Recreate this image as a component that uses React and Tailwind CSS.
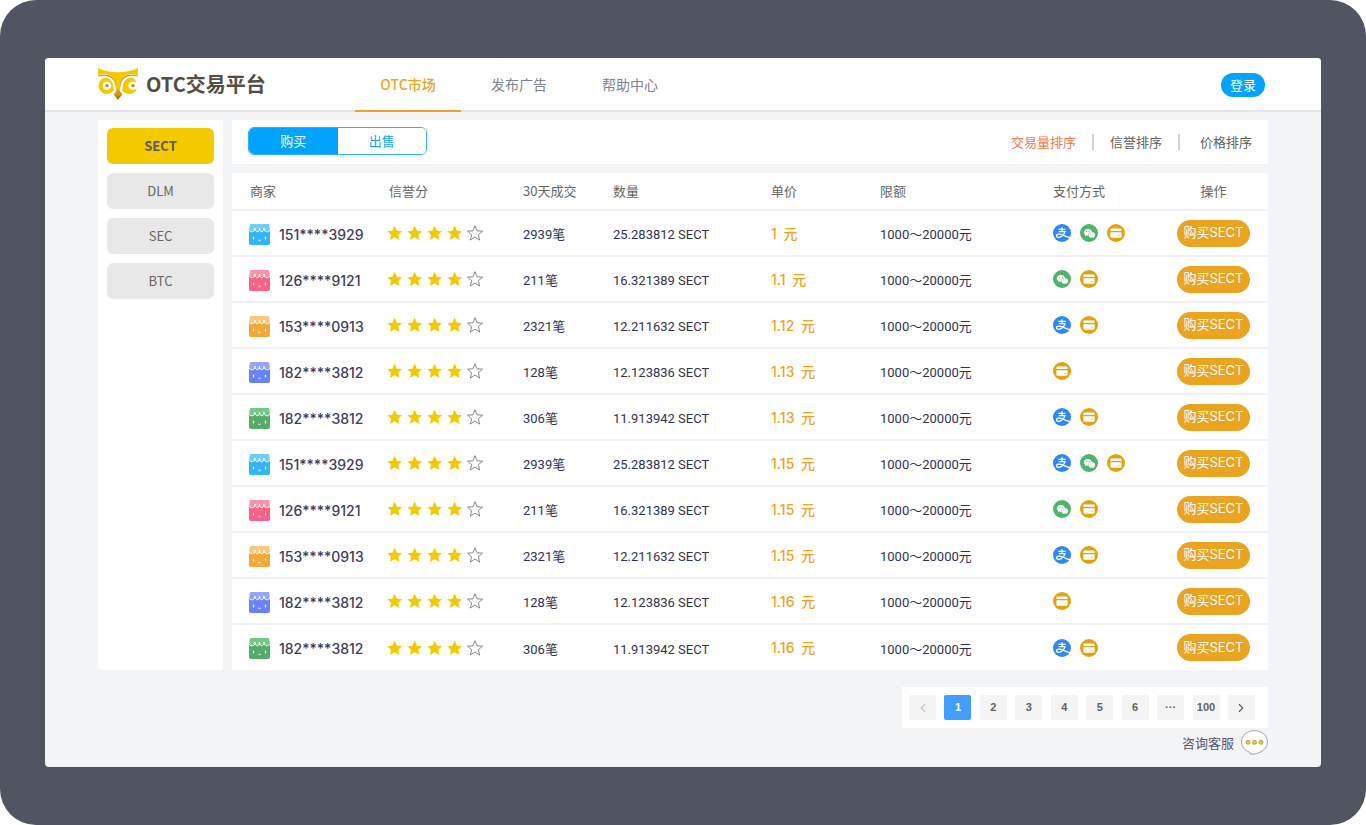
import { useState } from "react";
import clsx from "clsx";
import { ChevronLeft, ChevronRight } from "lucide-react";
import { AiFillWechat } from "react-icons/ai";

const NAV = ["OTC市场", "发布广告", "帮助中心"];
const COINS = ["SECT", "DLM", "SEC", "BTC"];
const SORTS = ["交易量排序", "信誉排序", "价格排序"];
const PAGES = ["1", "2", "3", "4", "5", "6", "···", "100"];

const COLUMNS = [
  { label: "商家", className: "w-[155px] pl-[18px] text-left" },
  { label: "信誉分", className: "w-[136px] pl-[2px] text-left" },
  { label: "30天成交", className: "w-[90px] text-left" },
  { label: "数量", className: "w-[158px] text-left" },
  { label: "单价", className: "w-[109px] text-left" },
  { label: "限额", className: "w-[173px] text-left" },
  { label: "支付方式", className: "w-[106px] text-left" },
  { label: "操作", className: "w-[109px] text-center" },
];

const SELLERS = [
  { phone: "151****3929", deals: 2939, amount: "25.283812", pay: ["alipay", "wechat", "card"], body: "#33b5fb", roof: "#6fcdfb" },
  { phone: "126****9121", deals: 211, amount: "16.321389", pay: ["wechat", "card"], body: "#fb6087", roof: "#fd92ab" },
  { phone: "153****0913", deals: 2321, amount: "12.211632", pay: ["alipay", "card"], body: "#f3a93a", roof: "#fbc77b" },
  { phone: "182****3812", deals: 128, amount: "12.123836", pay: ["card"], body: "#6783fb", roof: "#93a6fc" },
  { phone: "182****3812", deals: 306, amount: "11.913942", pay: ["alipay", "card"], body: "#57ab6a", roof: "#74c986" },
];

const PRICES = ["1", "1.1", "1.12", "1.13", "1.13", "1.15", "1.15", "1.15", "1.16", "1.16"];

const OFFERS = PRICES.map((price, i) => ({ id: i, price, ...SELLERS[i % SELLERS.length] }));

function OwlLogo() {
  return (
    <svg viewBox="0 0 122 98" className="h-[32px] w-[42px]" aria-hidden="true">
      <circle cx="27" cy="54" r="26" fill="#f5c900" />
      <circle cx="27" cy="54" r="13" fill="#fff" />
      <circle cx="27" cy="54" r="5" fill="#c98a12" />
      <circle cx="95" cy="54" r="26" fill="#f5c900" />
      <circle cx="106" cy="54" r="13" fill="#fff" />
      <path d="M106 48L124 40V68L106 60Z" fill="#fff" />
      <circle cx="107" cy="54" r="5" fill="#c98a12" />
      <path d="M0 22C26 16 44 26 50 46L55 78H67L72 46C78 26 96 16 122 22V30C100 25 84 31 77 48L72 78H50L45 48C38 31 22 25 0 30Z" fill="#fff" />
      <path d="M1 23C26 15 48 23 55 44L58 74H64L67 44C74 23 96 15 121 23V26C98 20 78 27 70 45L65 76H57L52 45C44 27 24 20 1 26Z" fill="#d69a12" />
      <path d="M0 0C18 9 40 13 61 13C82 13 104 9 122 0V23C98 14 76 22 68 42L64 76H58L54 42C46 22 24 14 0 23Z" fill="#f5c900" />
      <path d="M61 66L74 81L61 98L48 81Z" fill="#b8791a" />
      <path d="M61 66L74 81L61 86L48 81Z" fill="#d99a16" />
    </svg>
  );
}

function ShopIcon({ body, roof }) {
  return (
    <svg viewBox="0 0 21 21" className="size-[21px] shrink-0" aria-hidden="true">
      <path d="M0 7H21V19a2 2 0 0 1-2 2H2a2 2 0 0 1-2-2Z" fill={body} />
      <path d="M2 0H19Q20 0 20.200 1L21 6Q20 8 18 8Q15 8 15 4Q15 8 13 8Q10.500 8 10.500 4Q10.500 8 8 8Q6 8 6 4Q6 8 3 8Q1 8 0 6L.8 1Q1 0 2 0Z" fill={roof} />
      <path d="M0 6C1 9 6 8.500 6 4C6 9 10.500 9 10.500 4C10.500 9 15 9 15 4C15 8.500 20 9 21 6" fill="none" stroke="#fff" strokeWidth="1" strokeLinecap="round" />
      <path d="M4.500 13V15M16.500 13V15" stroke="#fff" strokeWidth="1.200" strokeLinecap="round" />
      <path d="M9.500 16.300Q10.500 17.500 11.500 16.300" fill="none" stroke="#fff" strokeWidth="1" strokeLinecap="round" />
    </svg>
  );
}

function Star({ filled }) {
  return (
    <svg
      viewBox="0 0 24 24"
      className={clsx("size-4", filled ? "text-[#f5c900]" : "text-[#777]")}
      fill={filled ? "currentColor" : "none"}
      stroke={filled ? "none" : "currentColor"}
      strokeWidth="1.3"
      aria-hidden="true"
    >
      {filled ? (
        <path d="M11.500 1L14.900 8.500L22.500 9.200L17 14.700L18.600 22.500L11.500 18.400L4.400 22.500L6 14.700L.5 9.200L8.100 8.500Z" />
      ) : (
        <path d="M12 1L15.100 8.700L23.300 9.200L17 14.500L19 22.600L12 18.200L5 22.600L7 14.500L.7 9.200L8.900 8.700Z" />
      )}
    </svg>
  );
}

function PayIcon({ type }) {
  if (type === "alipay") {
    return (
      <svg viewBox="0 0 18 18" className="size-[18px]" aria-label="支付宝">
        <circle cx="9" cy="9" r="9" fill="#2f88f5" />
        <path
          d="M5.300 5.300H12.700M9 3.300V7.600M5.800 7.700H12C11.300 10.500 8.500 13.300 5.500 13.300C2.700 13.300 2.900 10.300 5.700 10.200C9 10.100 12 12.800 17 13.600"
          fill="none"
          stroke="#fff"
          strokeWidth="1.3"
        />
      </svg>
    );
  }
  if (type === "wechat") {
    return (
      <span className="flex size-[18px] items-center justify-center rounded-full bg-[#4fb56d]">
        <AiFillWechat className="size-[13px] text-white" aria-label="微信" />
      </span>
    );
  }
  return (
    <svg viewBox="0 0 18 18" className="size-[18px]" aria-label="银行卡">
      <circle cx="9" cy="9" r="9" fill="#e2a30d" />
      <path d="M4.500 4.600H13.500Q14.600 4.600 14.600 5.700V7H3.400V5.700Q3.400 4.600 4.500 4.600Z" fill="#fff" />
      <path d="M3.400 8.200H14.600V12.600Q14.600 13.700 13.500 13.700H4.500Q3.400 13.700 3.400 12.600Z" fill="#fff" />
      <path d="M11 11.600H13" stroke="#f0cf7d" strokeWidth="1" />
    </svg>
  );
}

function ChatIcon() {
  return (
    <svg viewBox="0 0 27 25" className="h-[25px] w-[27px]" aria-hidden="true">
      <path d="M13.500.6C20.600.6 26.400 5.400 26.400 12C26.400 19 19 24.600 9 24.200C9.400 23.600 9.400 22.900 8.600 22.200C3.800 20.600.6 16.800.6 12C.6 5.400 6.400.6 13.500.6Z" fill="#fff" stroke="#8a8a8a" strokeWidth=".8" />
      {[7, 13.5, 20].map((cx) => (
        <circle key={cx} cx={cx} cy="12.3" r="2" fill="#f8d800" stroke="#8c8455" strokeWidth=".7" />
      ))}
    </svg>
  );
}

function Header({ tab, onTab }) {
  return (
    <header className="flex h-[54px] rounded-t-[4px] border-b-2 border-[#e6e6e6] bg-white pr-[56px] pl-[52px]">
      <a href="#" className="flex w-[258px] items-center gap-[7px] text-[20px] font-bold text-[#544d43]">
        <OwlLogo />
        OTC交易平台
      </a>
      <nav className="-mb-[2px] flex gap-[5px]">
        {NAV.map((label, i) => (
          <a
            key={label}
            href="#"
            onClick={() => onTab(i)}
            className={clsx(
              "flex w-[106px] items-center justify-center border-b-2 text-[14px]",
              tab === i ? "border-[#eda51f] font-medium text-[#eda51f]" : "border-transparent text-[#80828e]"
            )}
          >
            {label}
          </a>
        ))}
      </nav>
      <button className="mt-[15px] ml-auto h-6 w-11 rounded-full bg-[#00a3ff] text-[13px] text-white">登录</button>
    </header>
  );
}

function Toolbar({ side, onSide, sort, onSort }) {
  return (
    <div className="flex h-11 items-center justify-between bg-white px-4">
      <div className="mb-[2px] flex h-7 w-[179px] overflow-hidden rounded-md border border-[#2bb0fa]">
        {["购买", "出售"].map((label, i) => (
          <button
            key={label}
            onClick={() => onSide(i)}
            className={clsx("flex-1 text-[13px]", side === i ? "bg-[#00a3ff] text-white" : "bg-white text-[#12a5f7]")}
          >
            {label}
          </button>
        ))}
      </div>
      <div className="flex items-center divide-x-2 divide-[#d4d4d4] text-[13px] leading-4">
        {SORTS.map((label, i) => (
          <button
            key={label}
            onClick={() => onSort(i)}
            className={clsx("px-4 last:pr-0 last:pl-5", sort === i ? "text-[#f27a4a]" : "text-[#5e5e5e]")}
          >
            {label}
          </button>
        ))}
      </div>
    </div>
  );
}

function OfferRow({ offer }) {
  return (
    <tr className="h-[46px] border-t-2 border-[#f0f2f5] text-[13px] text-[#2f3352]">
      <td className="pt-[2px] pl-[17px]">
        <div className="flex items-center gap-[9px] font-[Inter,sans-serif] text-[14px] font-medium text-[#403c5c]">
          <ShopIcon body={offer.body} roof={offer.roof} />
          {offer.phone}
        </div>
      </td>
      <td>
        <div className="flex gap-1" role="img" aria-label="4 / 5">
          {[0, 1, 2, 3, 4].map((n) => (
            <Star key={n} filled={n < 4} />
          ))}
        </div>
      </td>
      <td className="pt-1">{offer.deals}笔</td>
      <td className="pt-1">{offer.amount} SECT</td>
      <td className="font-[Inter,'Noto_Sans_CJK_SC',sans-serif] text-[14px] font-medium text-[#eda51f]">
        <span className="mr-[3px]">{offer.price}</span> 元
      </td>
      <td className="pt-1">1000～20000元</td>
      <td>
        <div className="flex items-center gap-[9px]">
          {offer.pay.map((type) => (
            <PayIcon key={type} type={type} />
          ))}
        </div>
      </td>
      <td className="text-center">
        <button className="h-[27px] w-[73px] rounded-full bg-[#eaa41f] font-[Inter,'Noto_Sans_CJK_SC',sans-serif] text-[13px] text-white">
          购买SECT
        </button>
      </td>
    </tr>
  );
}

function Pagination({ page, onPage }) {
  const box = "flex h-[25px] w-[27px] items-center justify-center rounded-[2px]";
  return (
    <nav className="flex h-[41px] w-[366px] items-center justify-between bg-white pr-[13px] pl-[7px] font-['Liberation_Sans',sans-serif] text-[11px] font-bold text-[#606266]">
      <button className={clsx(box, "bg-[#f4f4f5] text-[#c0c4cc]")} aria-label="上一页">
        <ChevronLeft size={14} strokeWidth={2} />
      </button>
      {PAGES.map((label) => (
        <button
          key={label}
          onClick={() => onPage(label)}
          className={clsx(box, page === label ? "bg-[#409eff] text-white" : "bg-[#f4f4f5]")}
        >
          {label}
        </button>
      ))}
      <button className={clsx(box, "bg-[#f4f4f5]")} aria-label="下一页">
        <ChevronRight size={14} strokeWidth={2} />
      </button>
    </nav>
  );
}

export default function App() {
  const [tab, setTab] = useState(0);
  const [coin, setCoin] = useState("SECT");
  const [side, setSide] = useState(0);
  const [sort, setSort] = useState(0);
  const [page, setPage] = useState("1");

  return (
    <div className="flex min-h-screen flex-col rounded-[36px] bg-[#515461] px-[45px] py-[58px] font-['Noto_Sans_CJK_SC',sans-serif]">
      <div className="flex-1 rounded-[4px] bg-[#f3f4f6]">
        <Header tab={tab} onTab={setTab} />
        <div className="px-[53px] pt-2">
          <div className="flex gap-[9px]">
            <aside className="flex w-[125px] shrink-0 flex-col gap-[9px] rounded-[3px] bg-white px-[9px] pt-2">
              {COINS.map((name) => (
                <button
                  key={name}
                  onClick={() => setCoin(name)}
                  className={clsx(
                    "h-9 rounded-md text-[13px]",
                    coin === name ? "bg-[#f5c900] font-bold text-[#5c5c5c]" : "bg-[#e8e8e8] text-[#666]"
                  )}
                >
                  {name}
                </button>
              ))}
            </aside>
            <main className="min-w-0 flex-1">
              <Toolbar side={side} onSide={setSide} sort={sort} onSort={setSort} />
              <table className="mt-[9px] w-full table-fixed bg-white font-[Roboto,'Noto_Sans_CJK_SC',sans-serif]">
                <thead className="font-['Noto_Sans_CJK_SC',sans-serif] text-[13px] text-[#666]">
                  <tr className="h-[37px]">
                    {COLUMNS.map((col) => (
                      <th key={col.label} className={clsx("font-normal", col.className)}>
                        {col.label}
                      </th>
                    ))}
                  </tr>
                </thead>
                <tbody>
                  {OFFERS.map((offer) => (
                    <OfferRow key={offer.id} offer={offer} />
                  ))}
                </tbody>
              </table>
            </main>
          </div>
          <div className="mt-[17px] flex flex-col items-end">
            <Pagination page={page} onPage={setPage} />
            <a href="#" className="mt-[2px] flex items-center gap-[7px] text-[13px] text-[#55536d]">
              咨询客服
              <ChatIcon />
            </a>
          </div>
        </div>
      </div>
    </div>
  );
}
